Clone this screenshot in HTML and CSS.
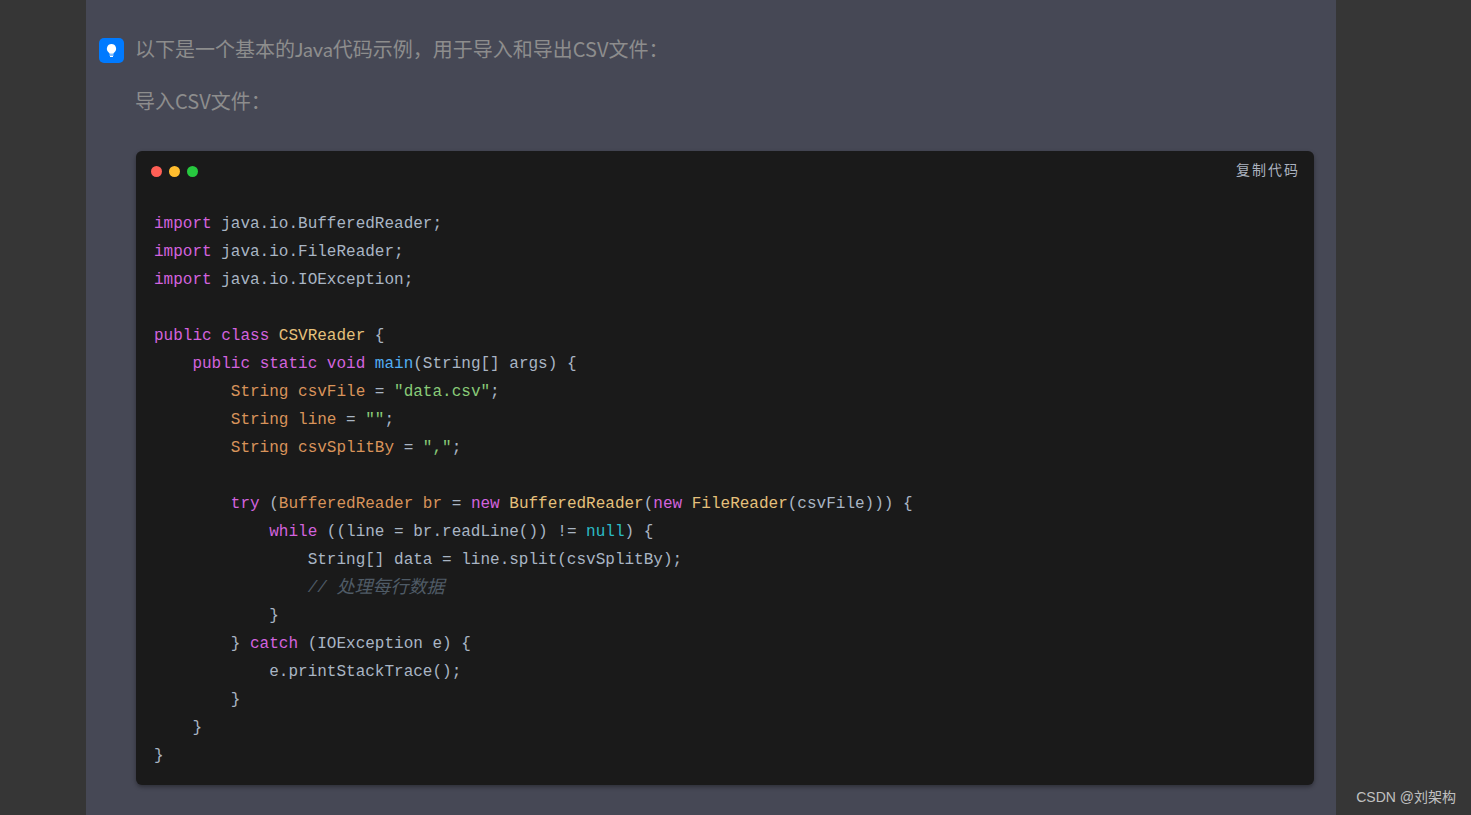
FILE: index.html
```html
<!DOCTYPE html>
<html lang="en">
<head>
    <meta charset="UTF-8">
    <meta name="viewport" content="width=device-width, initial-scale=1.0">
    <title>导入CSV文件</title>
    <link rel="stylesheet" href="styles.css">
</head>
<body>
    <div class="article">
        <div class="answer">
            <div class="bot-icon">
                <svg width="25" height="25" viewBox="0 0 25 25">
                    <path d="M12.5 6a4.700 4.700 0 0 0-2.800 8.400c.5.4.7.8.8 1.300h4c.1-.5.3-.9.8-1.300A4.700 4.700 0 0 0 12.500 6z" fill="#fff"/>
                    <rect x="10.500" y="16.500" width="4" height="1" fill="#fff"/>
                    <rect x="11" y="18" width="3" height="1" fill="#fff"/>
                </svg>
            </div>
            <div class="answer-body">
                <p>以下是一个基本的<span class="latin">Java</span>代码示例，用于导入和导出CSV文件：</p>
                <p>导入CSV文件：</p>
                <div class="code-block">
                    <div class="code-head">
                        <div class="dots">
                            <span class="dot red"></span>
                            <span class="dot yellow"></span>
                            <span class="dot green"></span>
                        </div>
                        <span class="copy">复制代码</span>
                    </div>
<pre><code><span class="kw">import</span> java.io.BufferedReader;
<span class="kw">import</span> java.io.FileReader;
<span class="kw">import</span> java.io.IOException;

<span class="kw">public</span> <span class="kw">class</span> <span class="cls">CSVReader</span> {
    <span class="kw">public</span> <span class="kw">static</span> <span class="kw">void</span> <span class="fn">main</span>(String[] args) {
        <span class="type">String</span> <span class="type">csvFile</span> = <span class="str">"data.csv"</span>;
        <span class="type">String</span> <span class="type">line</span> = <span class="str">""</span>;
        <span class="type">String</span> <span class="type">csvSplitBy</span> = <span class="str">","</span>;

        <span class="kw">try</span> (<span class="type">BufferedReader</span> <span class="type">br</span> = <span class="kw">new</span> <span class="cls">BufferedReader</span>(<span class="kw">new</span> <span class="cls">FileReader</span>(csvFile))) {
            <span class="kw">while</span> ((line = br.readLine()) != <span class="lit">null</span>) {
                String[] data = line.split(csvSplitBy);
                <span class="comment">// <span class="cjk">处理每行数据</span></span>
            }
        } <span class="kw">catch</span> (IOException e) {
            e.printStackTrace();
        }
    }
}</code></pre>
                </div>
            </div>
        </div>
    </div>
    <div class="watermark">CSDN @刘架构</div>
</body>
</html>
```

FILE: styles.css
```css
/* Page and article column */
* { box-sizing: border-box; }
html, body { height: 100%; }
body { margin: 0; background-color: #363636; font-family: "Noto Sans CJK SC", sans-serif; overflow: hidden; }
.article { width: 1250px; min-height: 100%; margin-left: 86px; padding: 35px 22px 30px 13px; background-color: #464855; }
.answer { display: flex; gap: 12px; }
.bot-icon { flex: none; width: 25px; height: 25px; margin-top: 3px; border-radius: 5px; background-color: #007aff; }
.bot-icon svg { display: block; }
.answer-body { flex: 1; min-width: 0; }
.answer-body p { margin: 0 0 24px; font-size: 20px; line-height: 28px; color: #8d8d8d; text-indent: -1px; }
.latin { font-family: Lato, sans-serif; }

/* Code block */
.code-block { margin-top: 36px; border-radius: 6px; background-color: #1a1a1a; box-shadow: 0 2px 4px rgba(0, 0, 0, 0.35); padding-bottom: 15px; }
.code-head { display: flex; justify-content: space-between; height: 59px; padding: 8px 14px 0 14.500px; }
.dots { display: flex; gap: 7px; padding-top: 6.500px; height: 17.500px; }
.dot { width: 11px; height: 11px; border-radius: 50%; }
.red { background-color: #ff5f56; }
.yellow { background-color: #ffbd2e; }
.green { background-color: #27c93f; }
.copy { font-size: 14px; line-height: 20px; letter-spacing: 2px; color: #abb2bf; }
pre { margin: 0; padding: 0 18px; }
code { font-family: "Liberation Mono", monospace; font-size: 16px; line-height: 28px; color: #a9b5c4; }
.kw { color: #d263de; }
.cls { color: #e5c07b; }
.type { color: #d8935a; }
.fn { color: #52adf2; }
.str { color: #89ca78; }
.lit { color: #2bbac5; }
.comment { color: #4f5b66; font-style: italic; }
.cjk { font-family: "Noto Sans CJK SC", sans-serif; font-size: 18px; line-height: 1; vertical-align: -1px; }

/* Watermark over the corner */
.watermark { position: absolute; right: 15px; bottom: 8px; font-family: "Liberation Sans", "Noto Sans CJK SC", sans-serif; font-size: 14px; line-height: 20px; color: rgba(255, 255, 255, 0.7); }
```
